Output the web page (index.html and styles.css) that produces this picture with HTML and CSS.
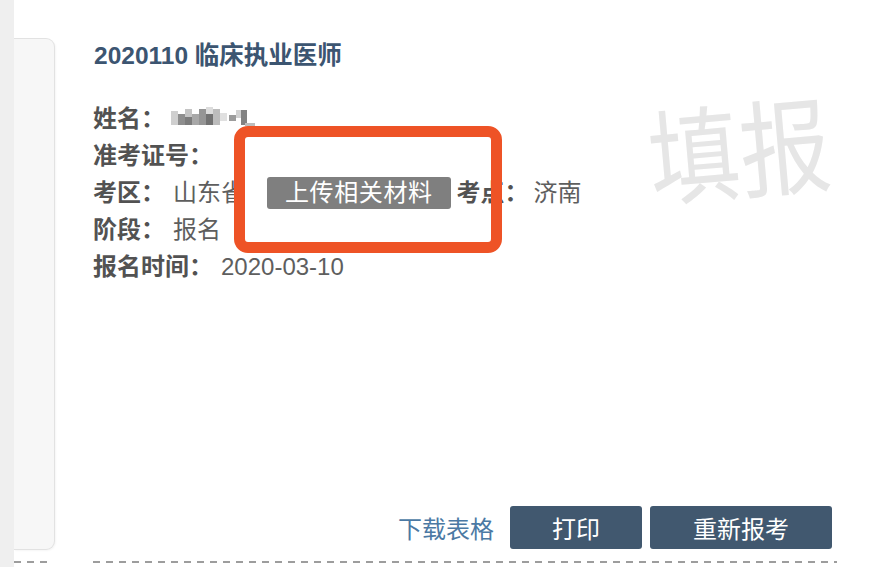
FILE: index.html
```html
<!DOCTYPE html>
<html lang="zh">
<head>
<meta charset="utf-8">
<title>报名</title>
<link rel="stylesheet" href="styles.css">
</head>
<body>
<div class="page">
  <div class="strip"></div>
  <div class="side">
    <div class="side-panel"></div>
    <div class="dash side-dash"></div>
  </div>
  <div class="main">
    <div class="title">2020110 临床执业医师</div>
    <div class="info">
      <div class="row"><span class="label">姓名：</span><span class="masked" aria-label="姓名已隐藏"><svg width="86" height="22" viewBox="0 0 86 22"><rect x="0" y="4" width="7" height="14" fill="#cfcfcf"/><rect x="7" y="7" width="7" height="11" fill="#8e8e8e"/><rect x="14" y="2" width="7" height="8" fill="#c4c4c4"/><rect x="14" y="10" width="7" height="8" fill="#7c7c7c"/><rect x="21" y="7" width="7" height="11" fill="#a8a8a8"/><rect x="28" y="2" width="7" height="16" fill="#959595"/><rect x="35" y="0" width="7" height="7" fill="#dcdcdc"/><rect x="35" y="7" width="7" height="11" fill="#727272"/><rect x="42" y="2" width="7" height="16" fill="#bcbcbc"/><rect x="49" y="6" width="7" height="8" fill="#e0e0e0"/><rect x="58" y="8" width="7" height="6" fill="#9c9c9c"/><rect x="65" y="3" width="7" height="8" fill="#d2d2d2"/><rect x="70" y="3" width="6" height="15" fill="#828282"/><rect x="74" y="16" width="10" height="3" fill="#bdbdbd"/></svg></span></div>
      <div class="row"><span class="label">准考证号：</span></div>
      <div class="row"><span class="label">考区：</span><span class="value">山东省</span><span class="upload-btn">上传相关材料</span><span class="label">考点：</span><span class="value value-tight">济南</span></div>
      <div class="row"><span class="label">阶段：</span><span class="value">报名</span></div>
      <div class="row"><span class="label">报名时间：</span><span class="value">2020-03-10</span></div>
    </div>
    <div class="spacer"></div>
    <div class="actions">
      <a class="link" href="#">下载表格</a>
      <button class="btn btn-print">打印</button>
      <button class="btn btn-retry">重新报考</button>
    </div>
    <div class="dash main-dash"></div>
    <div class="stamp">填报</div>
    <div class="highlight"></div>
  </div>
</div>
</body>
</html>
```

FILE: styles.css
```css
* { box-sizing: border-box; }
html, body { margin: 0; padding: 0; background: #fff; }
body {
  font-family: "Liberation Sans", "Noto Sans CJK SC", sans-serif;
  width: 895px;
  height: 567px;
  overflow: hidden;
}
.page {
  display: flex;
  height: 567px;
}
.strip {
  width: 14px;
  background: #efefef;
  flex: none;
}
.side {
  width: 41px;
  flex: none;
  display: flex;
  flex-direction: column;
  padding-top: 38px;
}
.side-panel {
  height: 512px;
  background: #f7f7f7;
  border: 1px solid #e2e2e2;
  border-left: none;
  border-radius: 0 9px 9px 0;
  box-shadow: 1px 1px 2px rgba(0,0,0,0.04);
}
.dash {
  height: 2px;
  background: repeating-linear-gradient(to right, #9d9d9d 0 7px, transparent 7px 13px);
}
.side-dash {
  margin-top: 11px;
  width: 38px;
}
.main {
  position: relative;
  margin-left: 38px;
  width: 744px;
  display: flex;
  flex-direction: column;
}
.title {
  margin-top: 41px;
  font-size: 24.5px;
  line-height: 30px;
  font-weight: bold;
  color: #3c5571;
  padding-left: 1px;
}
.info {
  margin-top: 29px;
  font-size: 24px;
}
.row {
  height: 37px;
  line-height: 37px;
  display: flex;
  align-items: center;
  white-space: nowrap;
}
.label {
  color: #525252;
  font-weight: bold;
}
.value {
  color: #5e5e5e;
  margin-left: 8px;
}
.value-tight { margin-left: 5px; }
.masked {
  display: inline-flex;
  align-items: center;
  margin-left: 6px;
  margin-top: -2px;
}
.masked svg { display: block; }
.upload-btn {
  display: inline-flex;
  align-items: center;
  height: 32px;
  margin-left: 22px;
  margin-right: 6px;
  padding: 0 18px;
  background: #7f7f7f;
  color: #fff;
  border-radius: 3px;
  font-size: 24px;
  letter-spacing: 0.6px;
}
.spacer { flex: 1; }
.actions {
  display: flex;
  align-items: center;
  justify-content: flex-end;
  padding-right: 5px;
  gap: 8px;
}
.link {
  color: #4b79a4;
  text-decoration: none;
  font-size: 24px;
  margin-right: 8px;
}
.btn {
  height: 43px;
  border: none;
  border-radius: 3px;
  background: #41586f;
  color: #fff;
  font-family: inherit;
  font-size: 24px;
  padding: 0;
}
.btn-print { width: 132px; }
.btn-retry { width: 182px; }
.main-dash {
  margin-top: 12px;
  margin-bottom: 4px;
  width: 744px;
}
.stamp {
  position: absolute;
  left: 555px;
  top: 86px;
  font-family: "Noto Sans CJK SC", sans-serif;
  font-size: 91px;
  line-height: 1.3;
  color: #e6e6e6;
  transform: rotate(-5deg) scaleY(1.15);
  transform-origin: center;
  pointer-events: none;
}
.highlight {
  position: absolute;
  left: 141px;
  top: 126px;
  width: 268px;
  height: 127px;
  border: 11px solid #ee5326;
  border-radius: 14px;
  pointer-events: none;
}
```
